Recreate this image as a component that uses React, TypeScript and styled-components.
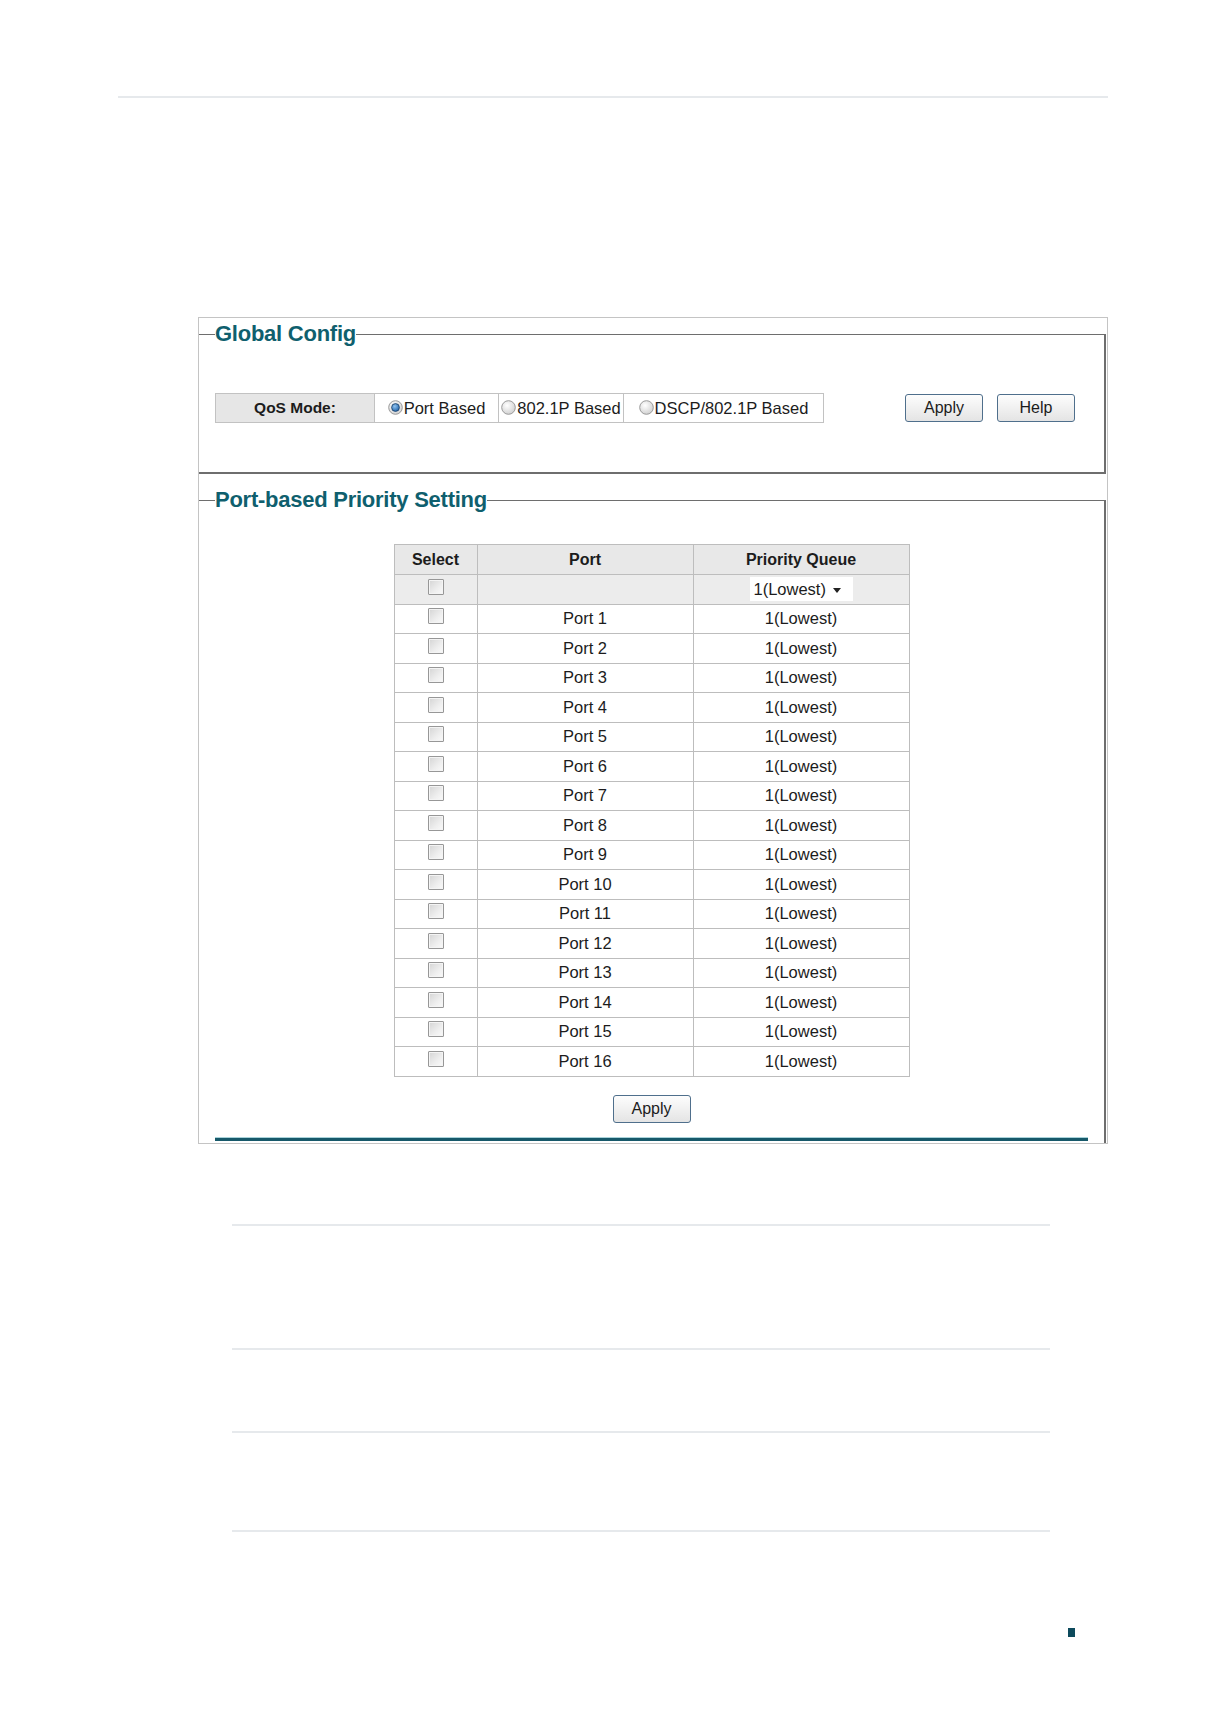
import React from "react";
import styled, { createGlobalStyle } from "styled-components";

const GlobalStyle = createGlobalStyle`
  html, body { margin: 0; padding: 0; background: #ffffff; }
  body { font-family: "Liberation Sans", Arial, sans-serif; color: #1c1c1c; }
  * { box-sizing: border-box; }
`;

const Page = styled.div`
  width: 1225px;
  height: 1718px;
  padding-top: 96px;
  display: flex;
  flex-direction: column;
  align-items: flex-start;
`;

const Rule = styled.div<{ $top: number; $left: number; $width: number }>`
  margin-top: ${(p) => p.$top}px;
  margin-left: ${(p) => p.$left}px;
  width: ${(p) => p.$width}px;
  height: 2px;
  background: #e6e9ec;
`;

const Panel = styled.div`
  margin-top: 219px;
  margin-left: 198px;
  width: 910px;
  border: 1px solid #c4c4c4;
  display: flex;
  flex-direction: column;
`;

const Fieldset = styled.fieldset<{ $first?: boolean }>`
  margin: ${(p) => (p.$first ? "4px 1px 0 0" : "14px 1px 0 0")};
  min-width: 0;
  border-style: solid;
  border-color: #6e6e6e;
  border-width: ${(p) => (p.$first ? "1px 2px 2px 0" : "1px 2px 0 0")};
  padding: ${(p) => (p.$first ? "47px 0 49px 16px" : "32px 16px 2px 16px")};
`;

const Legend = styled.legend`
  padding: 0;
  font-family: "Liberation Sans", Arial, sans-serif;
  font-weight: bold;
  font-size: 22px;
  line-height: 24px;
  letter-spacing: -0.25px;
  color: #0f5f6e;
`;

const ControlsRow = styled.div`
  display: flex;
  align-items: center;
`;

const ModeTable = styled.div`
  display: flex;
  border: 1px solid #c2c2c2;
  height: 30px;
`;

const ModeCell = styled.div<{ $width: number; $label?: boolean }>`
  width: ${(p) => p.$width}px;
  display: flex;
  align-items: center;
  justify-content: center;
  gap: 1px;
  font-size: ${(p) => (p.$label ? "15.5px" : "16.5px")};
  font-weight: ${(p) => (p.$label ? "bold" : "normal")};
  background: ${(p) => (p.$label ? "#e6e6e6" : "#ffffff")};
  border-left: ${(p) => (p.$label ? "none" : "1px solid #c2c2c2")};
  color: #1c1c1c;
  white-space: nowrap;
`;

const RadioMark = styled.svg`
  width: 15px;
  height: 15px;
  flex: none;
  margin-bottom: 2px;
`;

const ButtonGroup = styled.div`
  display: flex;
  gap: 14px;
  margin-left: 81px;
`;

const Button = styled.button`
  width: 78px;
  height: 28px;
  padding: 0;
  border: 1px solid #4f6f8c;
  border-radius: 3px;
  background: linear-gradient(#fdfdfd, #e4e4e4);
  font-family: "Liberation Sans", Arial, sans-serif;
  font-size: 16px;
  color: #1c1c1c;
`;

const Table = styled.table`
  margin: 0 auto;
  width: 515px;
  border-collapse: collapse;
  table-layout: fixed;
  border: 1px solid #b9b9b9;
`;

const Th = styled.th`
  height: 30px;
  padding: 0;
  border: 1px solid #bdbdbd;
  background: #e8e8e8;
  font-size: 16px;
  font-weight: bold;
  text-align: center;
  color: #1c1c1c;
`;

const Td = styled.td<{ $shade?: boolean }>`
  height: 29.5px;
  padding: 0;
  border: 1px solid #bdbdbd;
  background: ${(p) => (p.$shade ? "#ececec" : "#ffffff")};
  font-size: 16.5px;
  text-align: center;
  vertical-align: middle;
  color: #1c1c1c;
`;

const Check = styled.span`
  display: inline-block;
  width: 16px;
  height: 16px;
  margin-bottom: 5px;
  vertical-align: middle;
  border: 1px solid #979797;
  border-radius: 1px;
  background: linear-gradient(135deg, #d4d4d4 0%, #eeeeee 60%, #fafafa 100%);
  box-shadow: inset 0 0 0 1px #f4f4f4;
`;

const Select = styled.div`
  display: inline-flex;
  align-items: center;
  gap: 7px;
  width: 103px;
  height: 24px;
  padding-left: 4px;
  background: #ffffff;
  font-size: 16.5px;
  color: #1c1c1c;
`;

const Caret = styled.span`
  width: 0;
  height: 0;
  border-left: 4px solid transparent;
  border-right: 4px solid transparent;
  border-top: 5px solid #222;
  margin-top: 3px;
`;

const ApplyWrap = styled.div`
  display: flex;
  justify-content: center;
  margin-top: 18px;
`;

const TealLine = styled.div`
  margin-top: 14px;
  height: 4px;
  border-top: 1px solid #a9d3da;
  background: #17596a;
`;

const PageMark = styled.div`
  margin-top: 96px;
  margin-left: 1068px;
  width: 7px;
  height: 9px;
  background: #0d4a5c;
`;

function Radio({ checked }: { checked?: boolean }) {
  return (
    <RadioMark viewBox="0 0 15 15">
      <defs>
        <radialGradient id="rg-off" cx="40%" cy="35%" r="70%">
          <stop offset="0%" stopColor="#ffffff" />
          <stop offset="100%" stopColor="#cfcfcf" />
        </radialGradient>
        <radialGradient id="rg-on" cx="40%" cy="35%" r="70%">
          <stop offset="0%" stopColor="#8fc3f0" />
          <stop offset="100%" stopColor="#1d5fa6" />
        </radialGradient>
      </defs>
      <circle cx="7.5" cy="7.5" r="6.8" fill="url(#rg-off)" stroke="#9a9a9a" strokeWidth="1" />
      {checked && <circle cx="7.5" cy="7.5" r="3.9" fill="url(#rg-on)" stroke="#1a3f66" strokeWidth="0.8" />}
    </RadioMark>
  );
}

const ports = Array.from({ length: 16 }, (_, i) => `Port ${i + 1}`);

export default function App() {
  return (
    <>
      <GlobalStyle />
      <Page>
        <Rule $top={0} $left={118} $width={990} />
        <Panel>
          <Fieldset $first>
            <Legend>Global Config</Legend>
            <ControlsRow>
              <ModeTable>
                <ModeCell $width={158} $label>
                  QoS Mode:
                </ModeCell>
                <ModeCell $width={124}>
                  <Radio checked />
                  Port Based
                </ModeCell>
                <ModeCell $width={125}>
                  <Radio />
                  802.1P Based
                </ModeCell>
                <ModeCell $width={200}>
                  <Radio />
                  DSCP/802.1P Based
                </ModeCell>
              </ModeTable>
              <ButtonGroup>
                <Button>Apply</Button>
                <Button>Help</Button>
              </ButtonGroup>
            </ControlsRow>
          </Fieldset>
          <Fieldset>
            <Legend>Port-based Priority Setting</Legend>
            <Table>
              <colgroup>
                <col style={{ width: 83 }} />
                <col style={{ width: 216 }} />
                <col style={{ width: 216 }} />
              </colgroup>
              <thead>
                <tr>
                  <Th>Select</Th>
                  <Th>Port</Th>
                  <Th>Priority Queue</Th>
                </tr>
              </thead>
              <tbody>
                <tr>
                  <Td $shade>
                    <Check />
                  </Td>
                  <Td $shade />
                  <Td $shade>
                    <Select>
                      1(Lowest)
                      <Caret />
                    </Select>
                  </Td>
                </tr>
                {ports.map((p) => (
                  <tr key={p}>
                    <Td>
                      <Check />
                    </Td>
                    <Td>{p}</Td>
                    <Td>1(Lowest)</Td>
                  </tr>
                ))}
              </tbody>
            </Table>
            <ApplyWrap>
              <Button>Apply</Button>
            </ApplyWrap>
            <TealLine />
          </Fieldset>
        </Panel>
        <Rule $top={80} $left={232} $width={818} />
        <Rule $top={122} $left={232} $width={818} />
        <Rule $top={81} $left={232} $width={818} />
        <Rule $top={97} $left={232} $width={818} />
        <PageMark />
      </Page>
    </>
  );
}
